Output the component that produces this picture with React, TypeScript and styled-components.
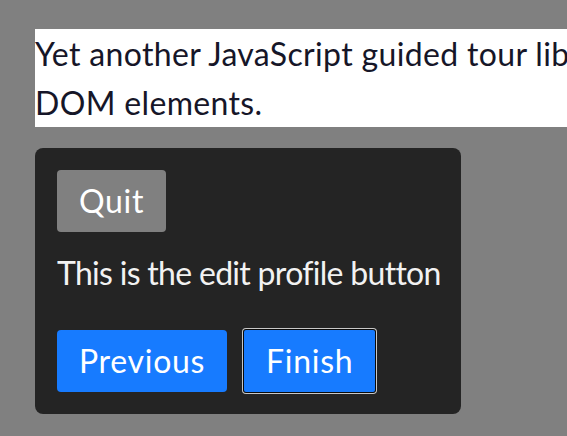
import React from "react";
import styled, { createGlobalStyle } from "styled-components";

const Global = createGlobalStyle`
  html, body { margin: 0; padding: 0; }
  body {
    background: #808080;
    font-family: Lato, "Noto Sans", sans-serif;
    overflow: hidden;
    width: 567px;
    height: 436px;
  }
`;

const Page = styled.div`
  padding: 29px 0 0 35px;
  display: flex;
  flex-direction: column;
  align-items: flex-start;
  overflow: hidden;
`;

const Intro = styled.p`
  margin: 0;
  width: 700px;
  background: #ffffff;
  color: #161628;
  font-size: 32px;
  line-height: 49px;
  letter-spacing: 0.35px;
  white-space: nowrap;
`;

const Tooltip = styled.div`
  margin-top: 21px;
  width: 382px;
  padding: 22px;
  background: #242424;
  border-radius: 8px;
  display: flex;
  flex-direction: column;
  align-items: flex-start;
`;

const Button = styled.button<{ $variant: "quit" | "primary"; $focused?: boolean }>`
  font-family: Lato, "Noto Sans", sans-serif;
  font-size: 32px;
  line-height: 48px;
  letter-spacing: 0.7px;
  padding: 7px 22px;
  border: none;
  color: #ffffff;
  cursor: pointer;
  background: ${(p) => (p.$variant === "quit" ? "#808080" : "#177bff")};
  box-shadow: ${(p) => (p.$focused ? "0 0 0 1px #0a0a0a, 0 0 0 2px #c8c8c8" : "none")};
  border-radius: ${(p) => (p.$focused ? "2px" : "4px")};
`;

const Message = styled.p`
  margin: 17px 0 0;
  color: #f2f2f2;
  font-size: 32px;
  line-height: 48px;
  letter-spacing: -0.7px;
  white-space: nowrap;
`;

const Footer = styled.div`
  margin-top: 33px;
  display: flex;
  gap: 17px;
`;

export default function App() {
  return (
    <>
      <Global />
      <Page>
        <Intro>
          Yet another JavaScript guided tour library for highlighting
          <br />
          DOM elements.
        </Intro>
        <Tooltip>
          <Button $variant="quit">Quit</Button>
          <Message>This is the edit profile button</Message>
          <Footer>
            <Button $variant="primary">Previous</Button>
            <Button $variant="primary" $focused>
              Finish
            </Button>
          </Footer>
        </Tooltip>
      </Page>
    </>
  );
}
